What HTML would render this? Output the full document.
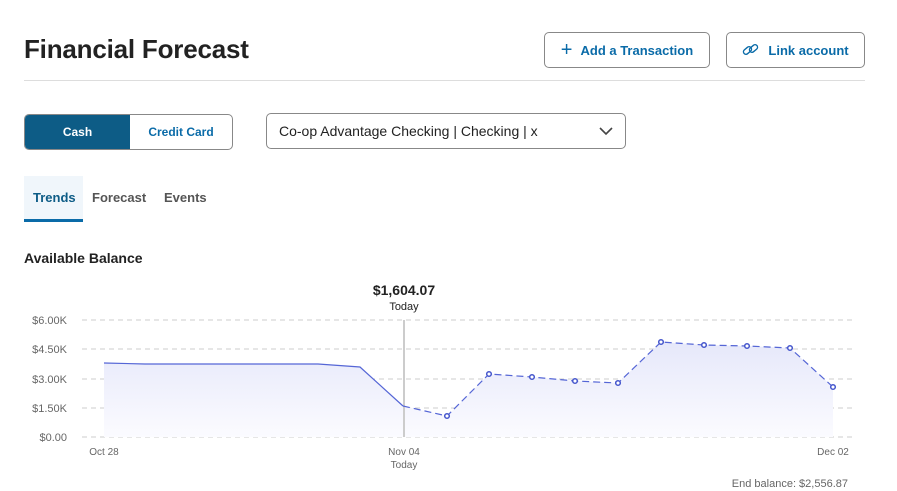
<!DOCTYPE html>
<html><head><meta charset="utf-8"><style>
body{margin:0;width:897px;height:491px;background:#fff;font-family:"Liberation Sans",sans-serif;position:relative;overflow:hidden}
.a{position:absolute}
h1{position:absolute;left:24px;top:34px;margin:0;font-size:26px;font-weight:bold;color:#222;letter-spacing:-0.2px}
.btn{position:absolute;border:1px solid #888;border-radius:5px;color:#0a6ba8;font-weight:bold;font-size:13px;display:flex;align-items:center;justify-content:center;box-sizing:border-box;background:#fff}
</style></head><body>
<h1>Financial Forecast</h1>
<div class="btn" style="left:544px;top:32px;width:166px;height:36px"><span style="font-size:20px;font-weight:normal;margin-right:8px">+</span>Add a Transaction</div>
<div class="btn" style="left:726px;top:32px;width:139px;height:36px"><svg width="18" height="16" viewBox="0 0 18 16" style="margin-right:8px"><g fill="none" stroke="#0a6ba8" stroke-width="1.4"><rect x="1" y="6" width="9" height="5" rx="2.5" transform="rotate(-40 5.5 8.5)"/><rect x="7" y="4" width="9" height="5" rx="2.5" transform="rotate(-40 11.5 6.5)"/></g></svg>Link account</div>
<div class="a" style="left:24px;top:80px;width:841px;height:1px;background:#ddd"></div>
<div class="a" style="left:24px;top:114px;width:209px;height:36px;border:1px solid #888;border-radius:5px;box-sizing:border-box;overflow:hidden;display:flex">
<div style="width:105px;background:#0d5c86;color:#fff;font-weight:bold;font-size:12px;display:flex;align-items:center;justify-content:center">Cash</div>
<div style="flex:1;color:#0a6ba8;font-weight:bold;font-size:12px;display:flex;align-items:center;justify-content:center">Credit Card</div></div>
<div class="a" style="left:266px;top:113px;width:360px;height:36px;border:1px solid #888;border-radius:5px;box-sizing:border-box;font-size:14px;color:#222;padding:9px 12px">Co-op Advantage Checking | Checking | x
<svg class="a" style="right:12px;top:13px" width="14" height="9"><path d="M1 1 L7 7 L13 1" fill="none" stroke="#444" stroke-width="1.6"/></svg></div>
<div class="a" style="left:24px;top:176px;width:59px;height:46px;background:#f0f6fb;border-bottom:3px solid #0a6ba8;box-sizing:border-box"></div>
<div class="a" style="left:33px;top:190px;font-size:13px;font-weight:bold;color:#0d5c86">Trends</div>
<div class="a" style="left:92px;top:190px;font-size:13px;font-weight:bold;color:#555">Forecast</div>
<div class="a" style="left:164px;top:190px;font-size:13px;font-weight:bold;color:#555">Events</div>
<div class="a" style="left:24px;top:250px;font-size:14px;font-weight:bold;color:#222">Available Balance</div>
<svg class="a" style="left:0;top:270px" width="897" height="221" viewBox="0 270 897 221">
<defs><linearGradient id="g" x1="0" y1="0" x2="0" y2="1"><stop offset="0" stop-color="#e6e8fa"/><stop offset="1" stop-color="#fbfbff"/></linearGradient></defs>
<g stroke="#ccc" stroke-dasharray="5 4"><line x1="82" y1="320" x2="855" y2="320"/><line x1="82" y1="349" x2="855" y2="349"/><line x1="82" y1="379" x2="855" y2="379"/><line x1="82" y1="408" x2="855" y2="408"/><line x1="82" y1="437" x2="855" y2="437"/></g>
<g font-size="11" fill="#666" text-anchor="end"><text x="67" y="324">$6.00K</text><text x="67" y="353">$4.50K</text><text x="67" y="383">$3.00K</text><text x="67" y="412">$1.50K</text><text x="67" y="441">$0.00</text></g>
<path d="M104 363 L145 364 L318 364 L360 367 L403 406 L447 416 L489 374 L532 377 L575 381 L618 383 L661 342 L704 345 L747 346 L790 348 L833 387 L833 437 L104 437Z" fill="url(#g)"/>
<line x1="404" y1="320" x2="404" y2="437" stroke="#ccc" stroke-width="2"/>
<path d="M104 363 L145 364 L318 364 L360 367 L403 406" fill="none" stroke="#5566d6" stroke-width="1.2"/>
<path d="M403 406 L447 416 L489 374 L532 377 L575 381 L618 383 L661 342 L704 345 L747 346 L790 348 L833 387" fill="none" stroke="#5566d6" stroke-width="1.2" stroke-dasharray="7 4"/>
<g fill="#fff" stroke="#4455cc" stroke-width="1.5"><circle cx="447" cy="416" r="2.3"/><circle cx="489" cy="374" r="2.3"/><circle cx="532" cy="377" r="2.3"/><circle cx="575" cy="381" r="2.3"/><circle cx="618" cy="383" r="2.3"/><circle cx="661" cy="342" r="2.3"/><circle cx="704" cy="345" r="2.3"/><circle cx="747" cy="346" r="2.3"/><circle cx="790" cy="348" r="2.3"/><circle cx="833" cy="387" r="2.3"/></g>
<text x="404" y="295" font-size="14" font-weight="bold" fill="#222" text-anchor="middle">$1,604.07</text>
<text x="404" y="310" font-size="11" fill="#222" text-anchor="middle">Today</text>
<g font-size="10" fill="#666" text-anchor="middle"><text x="104" y="455">Oct 28</text><text x="404" y="455">Nov 04</text><text x="404" y="468">Today</text><text x="833" y="455">Dec 02</text></g>
<text x="848" y="487" font-size="11" fill="#666" text-anchor="end">End balance: $2,556.87</text>
</svg>
</body></html>
